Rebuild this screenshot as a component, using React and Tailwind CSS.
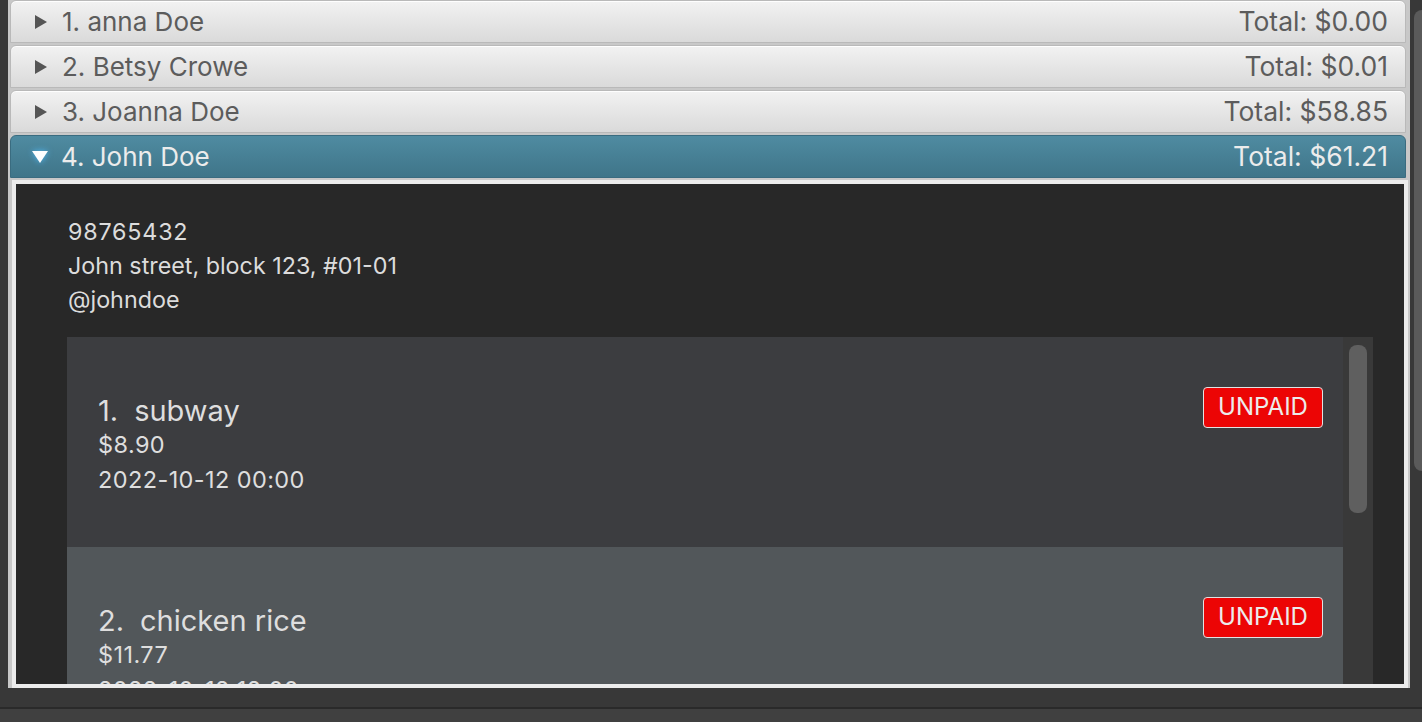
import React from "react";

const people = [
  { name: "1. anna Doe", total: "Total: $0.00" },
  { name: "2. Betsy Crowe", total: "Total: $0.01" },
  { name: "3. Joanna Doe", total: "Total: $58.85" },
];

const orders = [
  { no: "1.", item: "subway", price: "$8.90", date: "2022-10-12 00:00", bg: "bg-[#3c3d40]" },
  { no: "2.", item: "chicken rice", price: "$11.77", date: "2022-10-12 12:00", bg: "bg-[#52575a]" },
];

const Header = ({ name, total, open }) => (
  <div
    className={
      open
        ? "h-[43px] mb-[2px] shrink-0 flex items-center pl-[20px] pr-[17px] rounded-t-[6px] border border-[#3a6c80] bg-gradient-to-b from-[#4f8ba1] to-[#3f7589] text-[#ececec]"
        : "h-[43px] mb-[2px] shrink-0 flex items-center pl-[23px] pr-[17px] rounded-t-[6px] border border-[#b9b9b9] bg-gradient-to-b from-[#f2f2f2] to-[#dadada] text-[#5c5c5c] shadow-[inset_0_1px_0_rgba(255,255,255,0.9)]"
    }
  >
    {open ? (
      <svg width="18" height="14" viewBox="0 0 18 14" className="mr-[12px] drop-shadow-[0_0_3px_rgba(80,190,255,0.9)]">
        <polygon points="1,1 17,1 9,13" fill="#ffffff" />
      </svg>
    ) : (
      <svg width="14" height="14" viewBox="0 0 14 14" className="mr-[14px]">
        <polygon points="1,0 13,7 1,14" fill="#555555" />
      </svg>
    )}
    <span className="text-[26px] leading-none">{name}</span>
    <span className="ml-auto text-[26.5px] leading-none">{total}</span>
  </div>
);

const OrderCard = ({ no, item, price, date, bg }) => (
  <div className={`h-[210px] shrink-0 pl-[31px] pr-[20px] pt-[53px] text-[#dedede] ${bg}`}>
    <div className="h-[40px] flex items-center justify-between">
      <span className="text-[29px] leading-none">
        {no}
        <span className="ml-[16px]">{item}</span>
      </span>
      <span className="h-[41px] w-[120px] mb-[6px] flex items-center justify-center rounded-[4px] border border-[#e2e2e2] bg-[#ec0505] text-[24px] text-[#ececec]">
        UNPAID
      </span>
    </div>
    <div className="h-[30px] flex items-center text-[23.5px] tracking-[0.4px]">{price}</div>
    <div className="h-[40px] flex items-center text-[23.5px] tracking-[0.4px]">{date}</div>
  </div>
);

export default function App() {
  return (
    <div className="w-[1422px] h-[722px] bg-[#383838] flex flex-col overflow-hidden font-['Inter',sans-serif]">
      <div className="flex h-[688px] shrink-0">
        <div className="w-[8px] shrink-0" />
        <div className="w-[1402px] shrink-0 bg-[#c8c8c8] flex flex-col pl-[2px] pr-[4px] pt-0">
          {people.map((p) => (
            <Header key={p.name} {...p} />
          ))}
          <Header name="4. John Doe" total="Total: $61.21" open />
          {/* expanded content */}
          <div className="flex-1 min-h-0 ml-[2px] mr-[-2px] border-[4px] border-[#ececec] bg-[#282828] pl-[51px] pr-[31px] pt-[31px] overflow-hidden">
            <div className="ml-[1px] text-[23.3px] leading-[34px] text-[#dcdcdc]">
              <div className="tracking-[0.8px]">98765432</div>
              <div>John street, block 123, #01-01</div>
              <div>@johndoe</div>
            </div>
            <div className="mt-[20px] flex h-[400px]">
              <div className="flex-1 flex flex-col">
                {orders.map((o) => (
                  <OrderCard key={o.no} {...o} />
                ))}
              </div>
              <div className="w-[30px] shrink-0 bg-[#393939] px-[6px] pt-[8px]">
                <div className="h-[168px] rounded-[8px] bg-[#5f5f5f]" />
              </div>
            </div>
          </div>
        </div>
        <div className="flex-1 pt-[10px] pl-[4px]">
          <div className="h-[461px] rounded-l-[8px] bg-[#5a5a5a]" />
        </div>
      </div>
      <div className="h-[19px] shrink-0" />
      <div className="h-[2px] shrink-0 bg-[#2a2a2a]" />
      <div className="flex-1 bg-[#404040]" />
    </div>
  );
}
